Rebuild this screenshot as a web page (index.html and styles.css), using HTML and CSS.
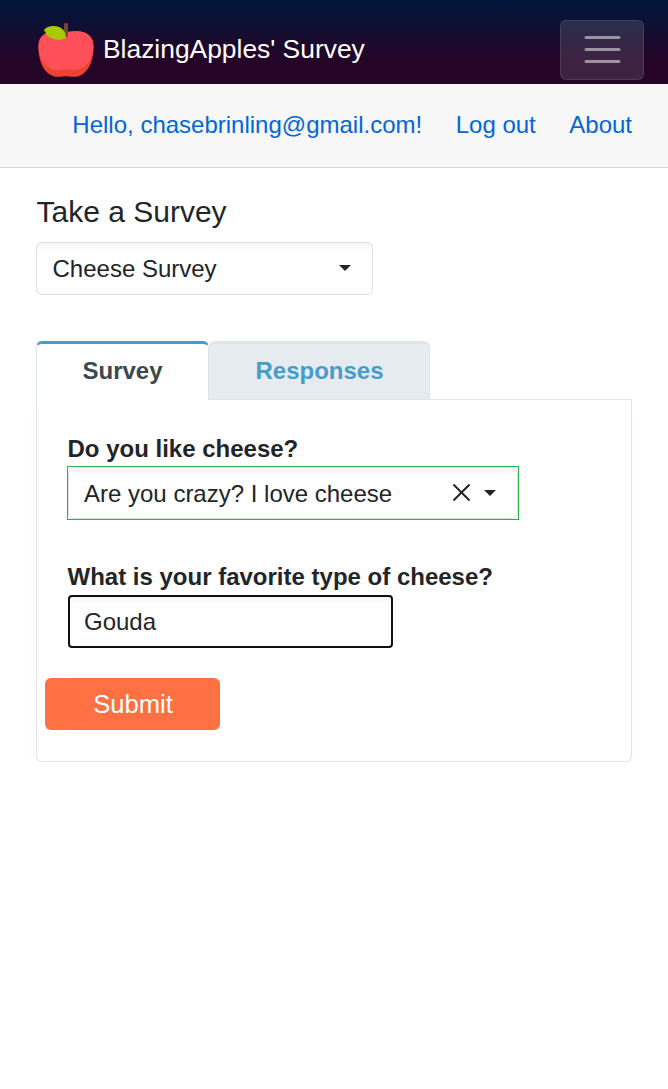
FILE: index.html
```html
<!DOCTYPE html>
<html lang="en">
<head>
<meta charset="utf-8">
<title>BlazingApples' Survey</title>
<link rel="stylesheet" href="styles.css">
</head>
<body>
<header class="navbar">
  <a class="brand">
    <svg class="apple" width="58" height="58" viewBox="0 0 58 58" aria-hidden="true">
      <path fill="#ef4130" d="M29 10C33 9.500 36 9.300 40 9.300C50 9.300 56.500 15 56.500 25C56.500 42 49 54.800 37 54.800C33 54.800 31 54.300 29 54.300C27 54.300 25 54.800 21 54.800C9 54.800 1.500 42 1.500 25C1.500 15 8 9.300 18 9.300C22 9.300 25 9.500 29 10Z"/>
      <path fill="#ff5059" d="M29 10C33 9.500 36 9.300 40 9.300C50 9.300 56.500 15 56.500 24C56.500 37 49 48 37 48C33 48 31 47 29 47C27 47 25 48 21 48C9 48 1.500 37 1.500 24C1.500 15 8 9.300 18 9.300C22 9.300 25 9.500 29 10Z"/>
      <path fill="#704a31" d="M27 1.300h4v13.700h-4Z"/>
      <path fill="#a9c900" d="M6.800 8.500C9 5 13 4 17 4C23 4 28.500 7.500 28.800 14.500C28.800 16.500 26 17.800 22 17.800C15 17.800 9.500 14.500 8.500 10C8.200 8.800 6.800 9.500 6.800 8.500Z"/>
    </svg>
    <span class="brand-name">BlazingApples' Survey</span>
  </a>
  <button class="toggler" type="button" aria-label="Toggle navigation">
    <svg width="45" height="45" viewBox="0 0 30 30"><path stroke="#fff" stroke-opacity=".5" stroke-width="2" stroke-linecap="round" d="M4 7h22M4 15h22M4 23h22"/></svg>
  </button>
</header>
<nav class="account">
  <a>Hello, chasebrinling@gmail.com!</a>
  <a>Log out</a>
  <a>About</a>
</nav>
<main class="content">
  <h1 class="title">Take a Survey</h1>
  <div class="select survey-select">
    <span class="value">Cheese Survey</span>
    <svg class="caret" width="12" height="6" viewBox="0 0 12 6"><path fill="#212529" d="M0 0h12L6 6Z"/></svg>
  </div>
  <div class="tabs">
    <div class="tab tab-active">Survey</div>
    <div class="tab tab-idle">Responses</div>
    <div class="tabs-rest"></div>
  </div>
  <section class="panel">
    <label class="question">Do you like cheese?</label>
    <div class="valid">
      <div class="select answer-select">
        <span class="value">Are you crazy? I love cheese</span>
        <svg class="clear" width="17" height="17" viewBox="0 0 17 17"><path stroke="#26212d" stroke-width="2" d="M.5 .5l16 16M16.500 .5L.5 16.500"/></svg>
        <svg class="caret" width="12" height="6" viewBox="0 0 12 6"><path fill="#212529" d="M0 0h12L6 6Z"/></svg>
      </div>
    </div>
    <label class="question question-next">What is your favorite type of cheese?</label>
    <div class="answer-text">Gouda</div>
    <button class="submit" type="button">Submit</button>
  </section>
</main>
</body>
</html>
```
FILE: styles.css
```css
* { box-sizing: border-box; }

body {
  margin: 0;
  background: #fff;
  color: #212529;
  font: 24px/36px "Liberation Sans", Arial, sans-serif;
}

svg { display: block; flex: none; fill: none; }

.navbar {
  display: flex;
  justify-content: space-between;
  align-items: flex-start;
  height: 84px;
  padding: 20px 24px 0 37px;
  background: linear-gradient(180deg, #00173d 0%, #240528 70%);
}

.brand { display: flex; color: #fff; }
.apple { margin-top: 2px; }
.brand-name { margin: 11px 0 0 8px; font-size: 26.4px; }

.toggler {
  display: flex;
  align-items: center;
  justify-content: center;
  width: 84px;
  height: 60px;
  padding: 0 0 1px;
  border: 1px solid rgba(255, 255, 255, 0.1);
  border-radius: 6px;
  background: rgba(255, 255, 255, 0.12);
}

.account {
  display: flex;
  justify-content: flex-end;
  align-items: center;
  gap: 33.500px;
  height: 84px;
  padding: 0 36px 2px;
  background: #f7f7f7;
  border-bottom: 1px solid #d6d5d5;
  color: #0366d6;
}

.content { padding: 26px 36px 0; }
.title { margin: 0 0 12px; padding-left: 0.500px; font-size: 30px; line-height: 36px; font-weight: 400; }

.select {
  display: flex;
  align-items: center;
  border: 1px solid #dbe0e4;
  border-radius: 6px;
  background: #fff;
  box-shadow: inset 0 12px 12px -12px rgba(0, 0, 0, 0.09);
}
.value { flex: 1; }
.caret { margin-bottom: 2px; }

.survey-select { width: 337px; height: 53px; padding: 0 21px 0 15.500px; }

.tabs { display: flex; height: 59px; margin-top: 46px; }
.tab {
  padding-top: 8px;
  text-align: center;
  font-weight: 700;
  line-height: 38px;
  border: 1px solid #dee6ec;
  border-top-width: 3px;
  border-radius: 6px 6px 0 0;
}
.tab-active {
  width: 173px;
  color: #3c484f;
  border-top-color: #479dca;
  border-bottom: 0;
}
.tab-idle {
  width: 221px;
  padding-left: 1px;
  border-left: 0;
  color: #479dca;
  background: #e6ebef;
}
.tabs-rest { flex: 1; border-bottom: 1px solid #e3e7eb; }

.panel {
  display: flex;
  flex-direction: column;
  align-items: flex-start;
  height: 362px;
  padding: 31px 30px 0;
  border: 1px solid #dfe5ea;
  border-top: 0;
  border-radius: 0 0 6px 6px;
  box-shadow: 0 12px 18px rgba(0, 0, 0, 0.02);
}
.question { padding-left: 0.500px; font-weight: 700; }

.valid {
  width: 452px;
  height: 54px;
  margin-top: -1px;
  border: 1px solid #26b050;
}
.answer-select { height: 52px; padding: 1px 21.500px 0 15px; }
.clear { margin: 0 13.500px 3px 0; }
.answer-select .caret { margin-bottom: 1px; }

.question-next { margin-top: 39px; }
.answer-text {
  width: 325px;
  height: 53px;
  margin-left: 1px;
  padding: 7px 14px;
  border: 2px solid #101010;
  border-radius: 4px;
  box-shadow: inset 0 12px 12px -12px rgba(0, 0, 0, 0.09);
}
.submit {
  width: 175px;
  height: 52px;
  margin: 30px 0 0 -22px;
  padding: 0 0 0 1px;
  border: 0;
  border-radius: 6px;
  background: #ff7043;
  color: #fff;
  font: 25.600px/52px "Liberation Sans", Arial, sans-serif;
}
```
